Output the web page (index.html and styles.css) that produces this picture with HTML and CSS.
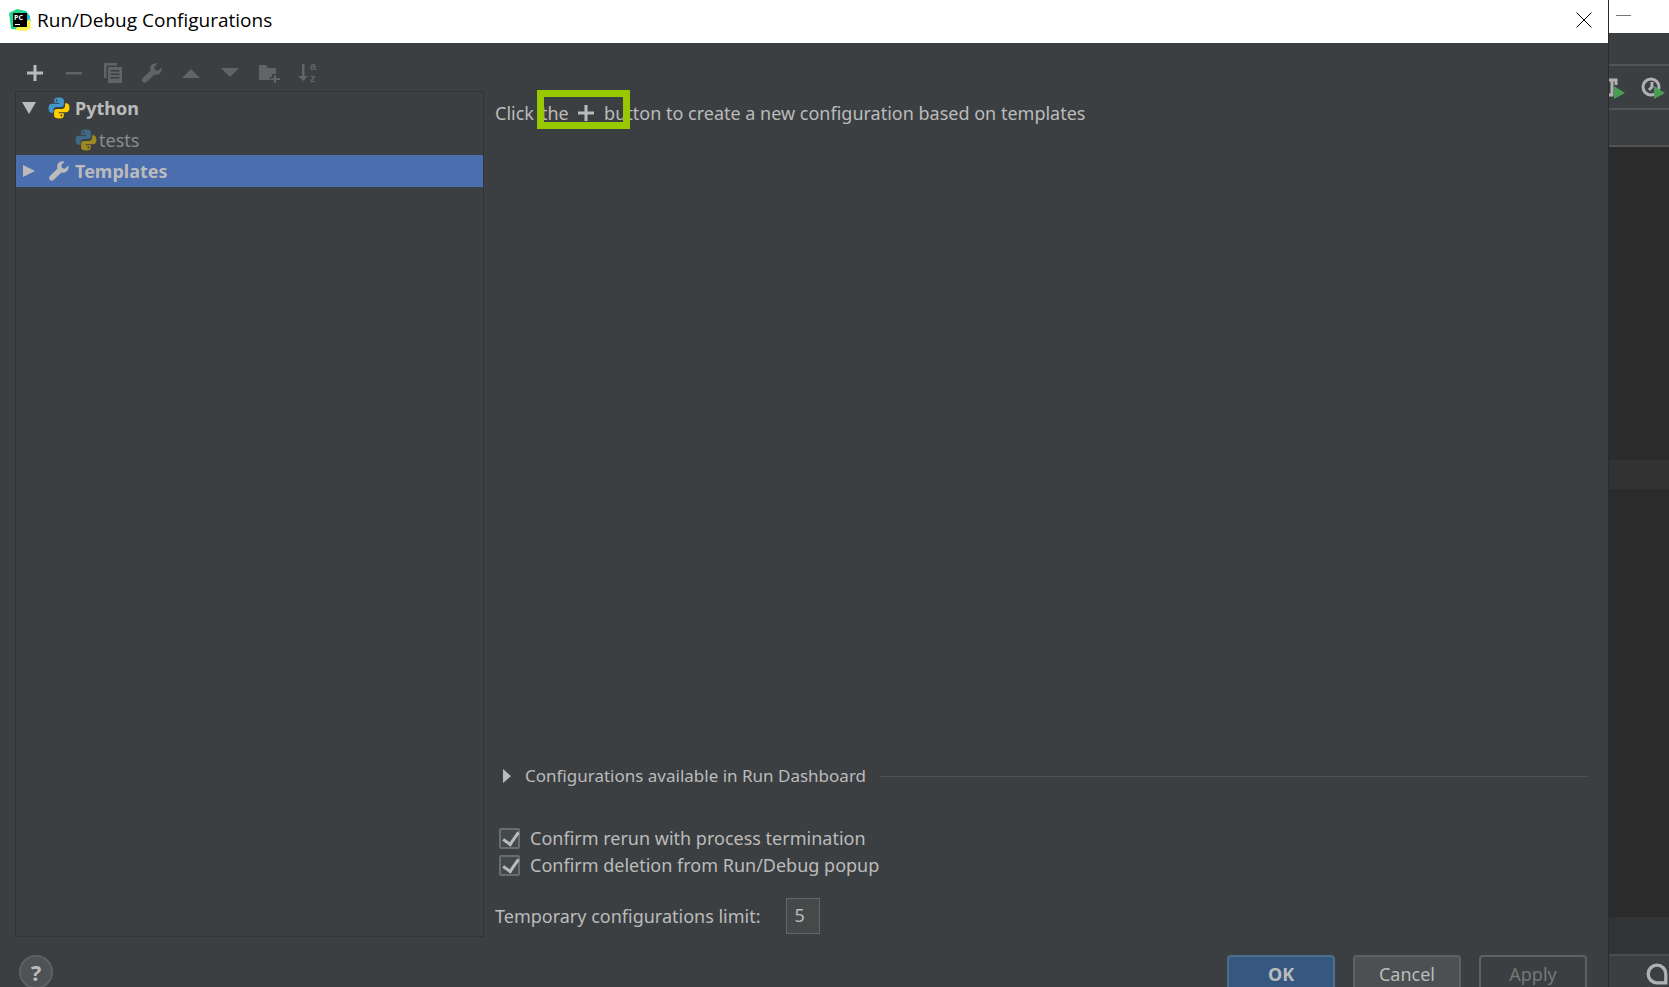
FILE: index.html
```
<!DOCTYPE html>
<html lang="en">
<head>
    <meta charset="UTF-8">
    <meta name="viewport" content="width=device-width, initial-scale=1.0">
    <title>Run/Debug Configurations</title>
    <link rel="stylesheet" href="styles.css">
</head>
<body>

    <!-- shared icons -->
    <svg class="sprite" aria-hidden="true">
        <symbol id="icon-plus" viewBox="0 0 16 16">
            <path d="M6.500 0h3v6.500H16v3H9.500V16h-3V9.500H0v-3h6.500z"/>
        </symbol>
        <symbol id="icon-wrench" viewBox="0 0 20 20">
            <path d="M19.300 4.600 16 7.700 13 7 12.300 4 15.400.700C12.800-.2 10 .7 8.800 3.100c-.8 1.500-.8 3-.2 4.500L.9 15.100c-1.100 1.100-1.100 2.700-.1 3.800 1.100 1.100 2.700 1.100 3.800 0l7.700-7.500c1.600.6 3.300.5 4.700-.4 2.200-1.400 3.100-4 2.300-6.400z"/>
        </symbol>
        <symbol id="icon-python" viewBox="0 0 22 22">
            <path fill="#4296cc" d="M10.800.5C7.200.5 6.200 1.600 6.200 3.500v2.300h5v.9H3.900C1.700 6.700.5 8.500.5 11.200s1.200 4.500 3.200 4.500h1.700v-2.500c0-2 1.600-3.200 3.300-3.200h4.600c1.500 0 2.600-1.200 2.600-2.700V3.500C15.900 1.500 14.300.5 10.800.5z"/>
            <circle cx="8.600" cy="3.400" r="1" fill="#3c3f41"/>
            <path fill="#ffd000" d="M11.200 21.500c3.600 0 4.600-1.100 4.600-3v-2.300h-5v-.9h7.300c2.200 0 3.400-1.800 3.400-4.500s-1.200-4.500-3.200-4.500h-1.200v2.400c0 2-1.500 3.200-3.200 3.200H8.700c-1.500 0-2.600 1.200-2.600 2.700v3.900c0 2 1.600 3 5.100 3z"/>
            <circle cx="13.400" cy="18.600" r="1" fill="#3c3f41"/>
        </symbol>
    </svg>

    <div class="desktop">
        <div class="dialog">
            <header class="titlebar">
                <svg class="app-icon" viewBox="0 0 22 22" aria-hidden="true">
                    <path fill="#21d789" d="M0 4 8 0l9 2 4 5-2 12-9 2-8-1z"/>
                    <path fill="#1fb5e8" d="M15 2l4 3 3 7-4 2z"/>
                    <path fill="#fcf84a" d="M21 10l1 9-5 3-11-1 3-4z"/>
                    <path d="M4 4h14v14H4z"/>
                    <text x="5" y="11" class="app-letters">PC</text>
                    <path fill="#fff" d="M6 15h5v1H6z"/>
                </svg>
                <h1 class="title">Run/Debug Configurations</h1>
                <button class="close" aria-label="Close">
                    <svg viewBox="0 0 16 16"><path d="M.5.5l15 15M15.500.5l-15 15"/></svg>
                </button>
            </header>

            <main class="content">
                <section class="sidebar">
                    <div class="toolbar">
                        <button class="tool active" aria-label="Add"><svg class="small"><use href="#icon-plus"/></svg></button>
                        <button class="tool" aria-label="Remove" disabled>
                            <svg viewBox="0 0 20 20"><path d="M2 9h16v2.500H2z"/></svg>
                        </button>
                        <button class="tool" aria-label="Copy" disabled>
                            <svg viewBox="0 0 20 20"><path d="M1 0h13v2.500H3.500V15H1z"/><path fill-rule="evenodd" d="M5 4h14v16H5zm2.500 3v1.500h9V7zm0 3.500V12h9v-1.500zm0 3.500v1.500h9V14z"/></svg>
                        </button>
                        <button class="tool" aria-label="Edit templates" disabled><svg><use href="#icon-wrench"/></svg></button>
                        <button class="tool" aria-label="Move up" disabled>
                            <svg viewBox="0 0 20 20"><path d="M1 15 10 6l9 9z"/></svg>
                        </button>
                        <button class="tool" aria-label="Move down" disabled>
                            <svg viewBox="0 0 20 20"><path d="M1 5h18l-9 9z"/></svg>
                        </button>
                        <button class="tool" aria-label="Create folder" disabled>
                            <svg viewBox="0 0 20 20"><path d="M0 2h7l2 3h8v6h-4v3h-2v3H0z"/><path d="M15 12h2v3h4v2h-4v3h-2v-3h-3v-2h3z"/></svg>
                        </button>
                        <button class="tool" aria-label="Sort" disabled>
                            <svg viewBox="0 0 20 20"><path d="M4 1h2.500v12H10l-4.700 5L0 13h4z"/><text x="12" y="7" class="sort-letters">a</text><text x="12" y="19" class="sort-letters">z</text></svg>
                        </button>
                    </div>

                    <ul class="tree">
                        <li class="row">
                            <svg class="arrow" viewBox="0 0 14 14"><path d="M0 1h14L7 13z"/></svg>
                            <svg class="node-icon"><use href="#icon-python"/></svg>
                            <span>Python</span>
                        </li>
                        <li class="row child">
                            <svg class="node-icon"><use href="#icon-python"/></svg>
                            <span>tests</span>
                        </li>
                        <li class="row selected">
                            <svg class="arrow" viewBox="0 0 14 14"><path d="M1 1l12 6-12 6z"/></svg>
                            <svg class="node-icon"><use href="#icon-wrench"/></svg>
                            <span>Templates</span>
                        </li>
                    </ul>
                </section>

                <section class="details">
                    <p class="hint">
                        <span>Click</span>
                        <span class="marked">the <svg class="hint-plus"><use href="#icon-plus"/></svg> but</span><span>ton to create a new configuration based on templates</span>
                    </p>

                    <div class="dashboard">
                        <svg class="expand" viewBox="0 0 8 14"><path d="M0 0l8 7-8 7z"/></svg>
                        <span>Configurations available in Run Dashboard</span>
                        <hr class="rule">
                    </div>

                    <div class="options">
                        <label class="option"><input type="checkbox" class="check" checked>Confirm rerun with process termination</label>
                        <label class="option"><input type="checkbox" class="check" checked>Confirm deletion from Run/Debug popup</label>
                    </div>

                    <div class="limit">
                        <label for="limit">Temporary configurations limit:</label>
                        <input type="text" id="limit" class="limit-field" value="5">
                    </div>
                </section>
            </main>

            <footer class="footer">
                <button class="help" aria-label="Help">?</button>
                <div class="actions">
                    <button class="btn primary">OK</button>
                    <button class="btn">Cancel</button>
                    <button class="btn" disabled>Apply</button>
                </div>
            </footer>
        </div>

        <!-- IDE window behind the dialog -->
        <div class="ide">
            <div class="ide-title"><svg viewBox="0 0 15 1"><path d="M0 0h15v1H0z"/></svg></div>
            <div class="ide-menu"></div>
            <div class="ide-tools">
                <svg viewBox="0 0 60 44">
                    <path class="ide-stroke" d="M0 14h7v5M3 14v15H0"/>
                    <circle class="ide-stroke" cx="42" cy="21" r="8"/>
                    <path class="ide-stroke" d="M43 16v5l-3 3"/>
                    <path class="ide-run" d="M5 20l11 7-11 6zM45 20l11 7-11 6z"/>
                </svg>
            </div>
            <div class="ide-tabs"></div>
            <div class="ide-editor"><div class="ide-line"></div></div>
            <div class="ide-panel"></div>
            <div class="ide-status">
                <svg viewBox="0 0 20 20"><path class="ide-stroke" d="M18 18h-8a8 8 0 1 1 8-8z"/></svg>
            </div>
        </div>
    </div>

</body>
</html>
```
FILE: styles.css
```
* { box-sizing: border-box; }

body {
    margin:             0;
    background-color:   #3c3f41;
    color:              #bbbbbb;
    font-family:        "Noto Sans", "Open Sans", sans-serif;
    font-size:          18px;
    line-height:        24px;
}

button, input {
    font:               inherit;
    color:              inherit;
    margin:             0;
}

svg                     { display: block; fill: currentColor; }
.sprite                 { display: none; }

.desktop {
    display:            flex;
    height:             100vh;
    overflow:           hidden;
}

.dialog {
    flex:               1;
    min-width:          0;
    display:            flex;
    flex-direction:     column;
}

/* title bar */
.titlebar {
    display:            flex;
    align-items:        center;
    height:             43px;
    padding:            0 16px 3px 9px;
    background-color:   #ffffff;
    color:              #000000;
}

.app-icon               { width: 22px; height: 22px; }
.app-letters            { font: bold 7px "Open Sans", sans-serif; fill: #ffffff; }

.title {
    flex:               1;
    margin:             0 0 0 6px;
    font-family:        "Open Sans", "Noto Sans", sans-serif;
    font-size:          19px;
    font-weight:        normal;
}

.close {
    padding:            0;
    border:             0;
    background:         none;
}

.close svg {
    width:              16px;
    height:             16px;
    stroke:             #000000;
}

/* left column */
.content {
    flex:               1;
    min-height:         0;
    display:            flex;
    gap:                11px;
    padding:            0 21px 0 15px;
}

.sidebar {
    flex:               0 0 469px;
    display:            flex;
    flex-direction:     column;
}

.toolbar {
    display:            flex;
    gap:                19px;
    height:             48px;
    padding:            13px 10px 0;
}

.tool {
    display:            flex;
    align-items:        center;
    justify-content:    center;
    width:              20px;
    height:             34px;
    padding:            0;
    border:             0;
    background:         none;
    color:              #616466;
}

.tool svg               { width: 20px; height: 20px; overflow: visible; }
.tool .small            { width: 16px; height: 16px; }
.tool.active            { color: #bbbbbb; }
.sort-letters           { font: bold 11px "Liberation Sans", sans-serif; }

.tree {
    flex:               1;
    margin:             0;
    padding:            0;
    border:             1px solid #323537;
    list-style:         none;
}

.row {
    display:            flex;
    align-items:        center;
    gap:                5px;
    height:             32px;
    padding-left:       6px;
    font-weight:        bold;
}

.arrow                  { width: 14px; height: 14px; margin-right: 7px; }
.node-icon              { width: 22px; height: 22px; }
.selected               { background-color: #4b6eaf; }

.selected .node-icon    { width: 20px; height: 20px; margin: 0 1px; }

.child {
    gap:                2px;
    height:             31px;
    padding-left:       59px;
    color:              #8a8c8d;
    font-weight:        normal;
}

.child .node-icon       { opacity: 0.5; }

/* right column */
.details {
    flex:               1;
    min-width:          0;
    display:            flex;
    flex-direction:     column;
}

.hint {
    display:            flex;
    align-items:        center;
    margin:             58px 0 auto;
    white-space:        pre;
}

.hint > span:first-child { margin-right: 7px; }

.marked {
    position:           relative;
    display:            flex;
    align-items:        center;
}

.marked::after {
    content:            "";
    position:           absolute;
    inset:              -11px 3px -4px -4px;
    border:             7px solid #97c800;
}

.hint-plus              { width: 16px; height: 16px; margin: 0 5px; }

.dashboard {
    display:            flex;
    align-items:        center;
    padding-left:       8px;
    font-size:          17px;
}

.expand                 { width: 8px; height: 14px; margin-right: 14px; }

.rule {
    flex:               1;
    height:             1px;
    margin:             0 0 0 14px;
    border:             0;
    background-color:   #515456;
}

.options {
    display:            grid;
    gap:                3px;
    margin:             38px 0 21px 4px;
}

.option {
    display:            flex;
    align-items:        center;
    gap:                10px;
}

.check {
    appearance:         none;
    position:           relative;
    width:              21px;
    height:             21px;
    border:             2px solid #696c6d;
    border-radius:      2px;
    background-color:   #43494a;
}

.check:checked::after {
    content:            "";
    position:           absolute;
    left:               5px;
    top:                0;
    width:              7px;
    height:             13px;
    border:             solid #bbbbbb;
    border-width:       0 3px 3px 0;
    transform:          translate(0, -1px) rotate(35deg);
}

.limit {
    display:            flex;
    align-items:        center;
    gap:                25px;
    margin-bottom:      3px;
}

.limit-field {
    width:              34px;
    height:             36px;
    padding:            0 8px 2px;
    border:             1px solid #646464;
    background-color:   #45494a;
}

/* bottom buttons run past the lower edge of the screen */
.footer {
    flex:               0 0 50px;
    min-height:         0;
    display:            flex;
    justify-content:    space-between;
    align-items:        flex-start;
    padding:            18px 21px 0 19px;
}

.help {
    width:              34px;
    height:             34px;
    padding:            0;
    border:             2px solid #5e6162;
    border-radius:      50%;
    background-color:   #4e5254;
    font-size:          22px;
    font-weight:        bold;
}

.actions                { display: flex; gap: 18px; }

.btn {
    width:              108px;
    height:             38px;
    padding:            0;
    border:             2px solid #5e6162;
    border-radius:      4px;
    background-color:   #4c5052;
}

.btn.primary {
    border-color:       #4c708c;
    background-color:   #365880;
    font-weight:        bold;
}

.btn:disabled {
    background-color:   #3c3f41;
    color:              #777777;
}

/* IDE strip */
.ide {
    flex:               0 0 61px;
    min-width:          0;
    display:            flex;
    flex-direction:     column;
    border-left:        1px solid #2b2b2b;
}

.ide-title {
    height:             33px;
    padding:            15px 7px;
    background-color:   #ffffff;
    color:              #777777;
}

.ide-title svg          { width: 15px; height: 1px; }

.ide-menu, .ide-tools, .ide-tabs { border-bottom: 2px solid #515456; }
.ide-menu               { height: 33px; }
.ide-tools              { height: 44px; }
.ide-tools svg          { width: 60px; height: 44px; }
.ide-tabs               { height: 37px; }
.ide-stroke             { fill: none; stroke: #afb1b3; stroke-width: 3; }
.ide-run                { fill: #499c54; }

.ide-editor {
    flex:               1;
    padding-top:        313px;
    background-color:   #2b2b2b;
}

.ide-line               { height: 29px; background-color: #323232; }
.ide-panel              { height: 37px; background-color: #313335; }

.ide-status {
    height:             33px;
    padding:            7px 0 0 37px;
    border-top:         2px solid #4a4d4f;
}

.ide-status svg         { width: 22px; height: 22px; }
```
